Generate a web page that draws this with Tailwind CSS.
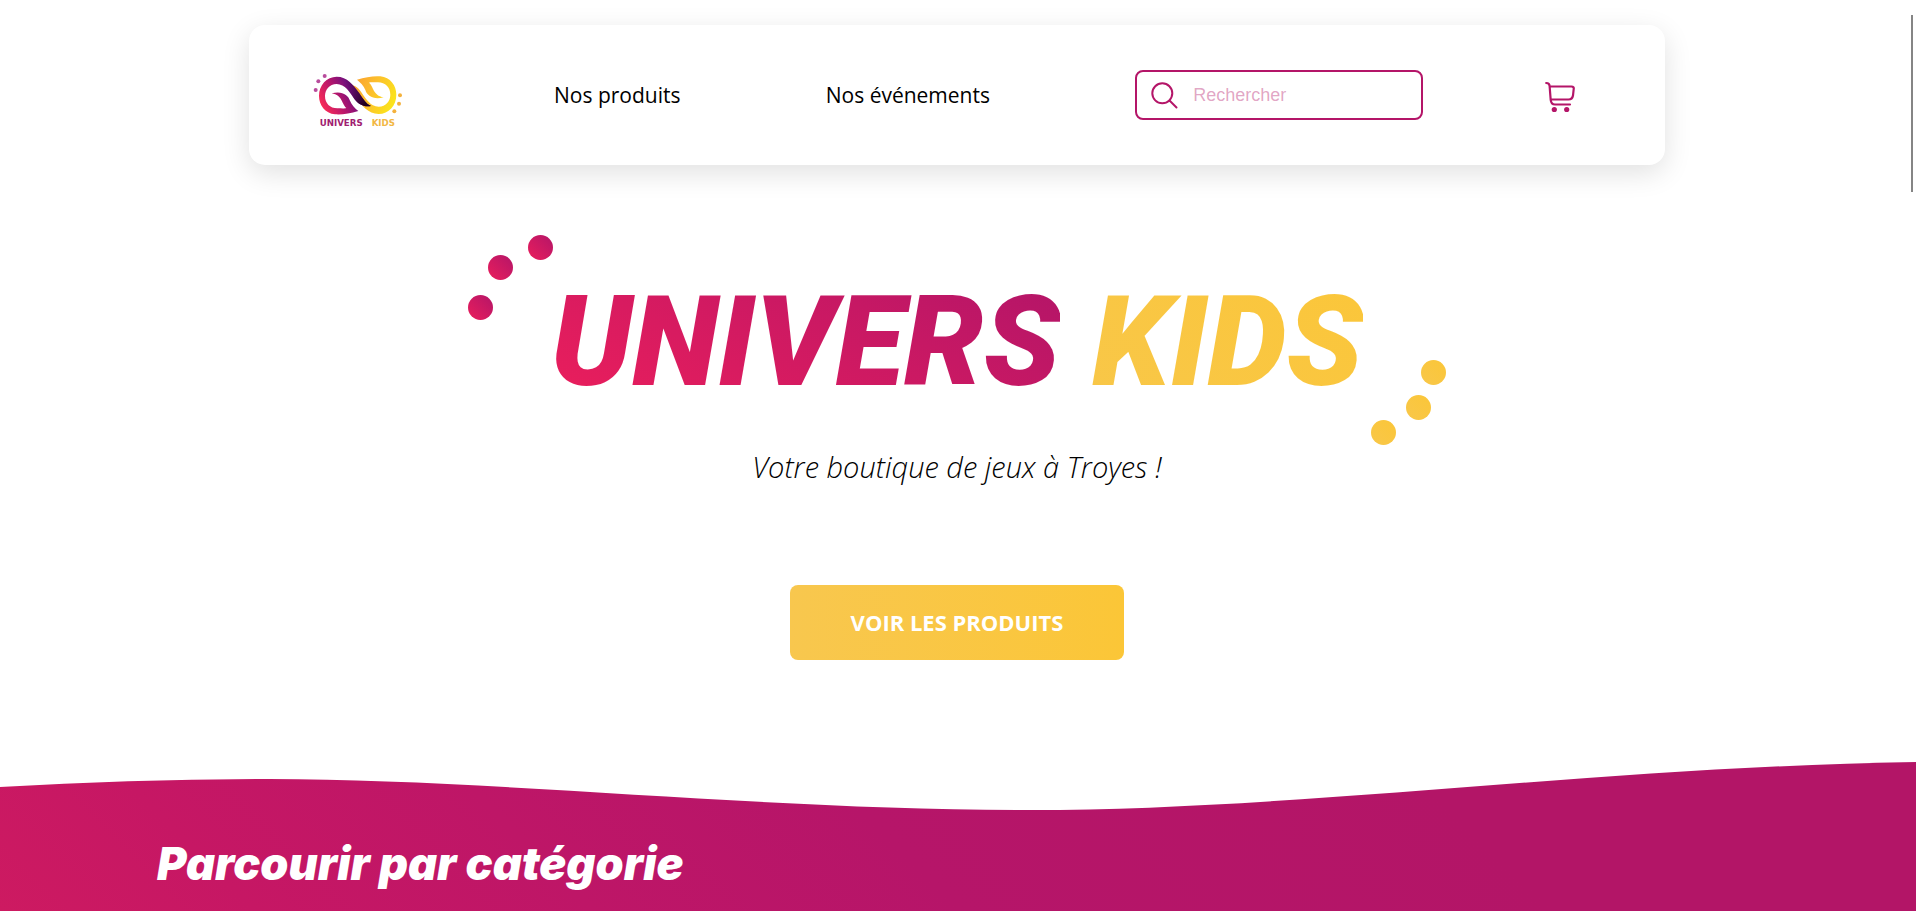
<!DOCTYPE html>
<html lang="fr">
<head>
<meta charset="utf-8">
<meta name="viewport" content="width=device-width, initial-scale=1">
<title>Univers Kids</title>
<script src="https://cdn.jsdelivr.net/npm/@tailwindcss/browser@4"></script>
</head>
<body class="flex min-h-screen flex-col overflow-x-hidden bg-white font-['Open_Sans','Noto_Sans',sans-serif] text-black">
<header class="pt-[25px] pr-[2px]">
  <nav class="mx-auto flex h-[140px] w-[74%] items-center justify-between rounded-2xl bg-white pr-[90px] pl-[60px] shadow-[0_8px_28px_rgba(0,0,0,0.12)]">
    <div class="flex w-[88%] items-center justify-between">
      <a href="#" aria-label="Univers Kids">
        <svg class="h-[66px] w-[100px]" viewBox="27 6 300 198">
          <defs>
            <linearGradient id="pink" gradientUnits="userSpaceOnUse" x1="65" y1="150" x2="185" y2="85">
              <stop offset="0" stop-color="#ff2d55"/><stop offset=".45" stop-color="#b5166c"/><stop offset=".75" stop-color="#78107c"/><stop offset="1" stop-color="#3a0440"/>
            </linearGradient>
            <linearGradient id="gold" gradientUnits="userSpaceOnUse" x1="65" y1="90" x2="170" y2="140">
              <stop offset="0" stop-color="#fbe31c"/><stop offset=".6" stop-color="#fcc02c"/><stop offset="1" stop-color="#fba92e"/>
            </linearGradient>
            <linearGradient id="night" gradientUnits="userSpaceOnUse" x1="130" y1="65" x2="195" y2="130">
              <stop offset="0" stop-color="#5c0a78" stop-opacity="0"/><stop offset="1" stop-color="#22001f"/>
            </linearGradient>
            <path id="loop" d="M175 153C150 160 125 165 105 163C75 160 57 135 57 108C57 75 80 50 110 50C142 50 160 75 178 100C190 118 198 132 213 138C190 142 175 132 163 117C150 98 135 72 110 72C88 72 75 90 75 108C75 130 90 145 112 145C125 145 135 146 139 144C125 133 128 106 95 100C125 91 145 105 150 122C155 135 165 145 175 153Z"/>
          </defs>
          <use href="#loop" fill="url(#gold)" transform="rotate(180 173 106)"/>
          <use href="#loop" fill="url(#pink)"/>
          <path fill="url(#night)" d="M130 56C150 65 164 80 178 100C190 118 198 132 213 138C190 142 175 132 163 117C152 100 145 85 130 76Z"/>
          <g fill="#b84c9c"><circle cx="74" cy="48" r="6"/><circle cx="55" cy="64" r="6"/><circle cx="47" cy="90" r="6"/></g>
          <g fill="#f4b13c"><circle cx="300" cy="106" r="6"/><circle cx="297" cy="131" r="6"/><circle cx="283" cy="154" r="6"/></g>
          <g class="font-['DejaVu_Sans',sans-serif] font-bold" font-size="26"><text x="59" y="197" fill="#a02070">UNIVERS</text><text x="215" y="197" fill="#f2b744">KIDS</text></g>
        </svg>
      </a>
      <a href="#" class="pt-0.5 text-[21px]">Nos produits</a>
      <a href="#" class="pt-0.5 text-[21px]">Nos événements</a>
      <form role="search" class="flex h-[50px] w-[288px] items-center gap-[15px] rounded-lg border-2 border-[#b41568] pl-[14px]">
        <label for="recherche" aria-label="Rechercher">
          <svg class="size-[27px]" viewBox="0 0 27 27" fill="none" stroke="#b41568" stroke-width="2" stroke-linecap="round"><circle cx="11.300" cy="11.300" r="10"/><path d="M18.500 18.500L25.500 25.500"/></svg>
        </label>
        <input id="recherche" type="text" placeholder="Rechercher" class="min-w-0 flex-1 font-['Liberation_Sans',sans-serif] text-[18px] outline-none placeholder:text-[#b41568]/40">
      </form>
    </div>
    <button type="button" aria-label="Panier" class="pt-1">
      <svg class="h-[32px] w-[30px]" viewBox="0 0 30 32" fill="none" stroke="#b41568" stroke-width="2.200" stroke-linecap="round" stroke-linejoin="round">
        <path d="M1.200 2C3.500 2 4.500 3 4.600 5L5.700 19C6 22 7.500 23.500 10 23.500H25M4.700 5.500H26.500C28.300 5.500 29 6.500 28.700 8L28 14.500C27.500 17.500 26.300 18.500 23.500 18.500H5.700"/>
        <g fill="#b41568" stroke="none"><circle cx="9.300" cy="28.500" r="2.600"/><circle cx="21.700" cy="28.500" r="2.600"/></g>
      </svg>
    </button>
  </nav>
</header>
<main class="flex flex-1 flex-col">
  <section class="flex flex-col items-center pt-[70px] pr-[2px]">
    <div class="relative flex h-[210px] w-[978px] max-w-full justify-center">
      <h1 class="flex items-center gap-8 pt-1 font-['Roboto',sans-serif] text-[126px] leading-[210px] font-black italic">
        <span class="bg-linear-[30deg,#ea1e5c_10%,#b41568_90%] bg-clip-text text-transparent">UNIVERS</span>
        <span class="bg-linear-[45deg,#f8c74a,#fbc638] bg-clip-text text-transparent">KIDS</span>
      </h1>
      <i class="absolute top-0 left-[60px] size-[25px] rounded-full bg-linear-[45deg,#ea1e5c,#b41568]"></i>
      <i class="absolute top-5 left-5 size-[25px] rounded-full bg-linear-[45deg,#ea1e5c,#b41568]"></i>
      <i class="absolute top-[60px] left-0 size-[25px] rounded-full bg-linear-[45deg,#ea1e5c,#b41568]"></i>
      <i class="absolute top-[125px] right-0 size-[25px] rounded-full bg-linear-[45deg,#f8c74a,#fbc638]"></i>
      <i class="absolute top-[160px] right-[15px] size-[25px] rounded-full bg-linear-[45deg,#f8c74a,#fbc638]"></i>
      <i class="absolute top-[185px] right-[50px] size-[25px] rounded-full bg-linear-[45deg,#f8c74a,#fbc638]"></i>
    </div>
    <p class="text-[29px] leading-[44px] font-light italic">Votre boutique de jeux à Troyes !</p>
    <a href="#" class="mt-24 flex h-[75px] w-[334px] items-center justify-center rounded-lg bg-linear-to-r from-[#f8c74e] to-[#fbc637] text-[22px] font-bold text-white">VOIR LES PRODUITS</a>
  </section>
  <section class="mt-[101px] flex flex-1 flex-col bg-linear-[45deg,#cd1a61_0px,#c61764_180px,#be1667_420px,#b61569_680px,#b31567_1100px]">
    <svg class="h-[50px] w-full" viewBox="0 0 1916 50" preserveAspectRatio="none"><path fill="#fff" d="M0 -1V26C90 21 180 18 270 18C490 18 760 49 1030 49C1300 49 1600 6 1916 1V-1Z"/></svg>
    <h2 class="pt-[26px] pl-[157px] font-['Inter',sans-serif] text-[45px] leading-[54px] font-black text-white italic">Parcourir par catégorie</h2>
  </section>
</main>
<div aria-hidden="true" class="fixed top-[15px] right-[3px] h-[177px] w-[2px] bg-[#858585]"></div>
</body>
</html>
